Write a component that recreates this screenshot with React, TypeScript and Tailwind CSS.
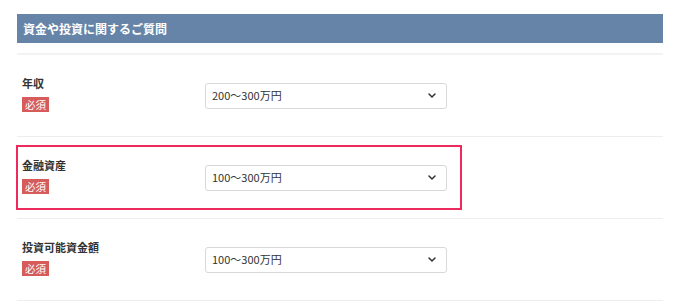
import React from "react";

const font = { fontFamily: '"Noto Sans CJK JP", "Noto Sans", sans-serif' };

function Chevron() {
  return (
    <svg width="8" height="5" viewBox="0 0 8 5" fill="none">
      <path d="M1 1 L4 4 L7 1" stroke="#333333" strokeWidth="1.5" strokeLinecap="round" strokeLinejoin="round" />
    </svg>
  );
}

function Row({ label, value, highlight }: { label: string; value: string; highlight?: boolean }) {
  return (
    <div className="relative h-[82px] border-b border-[#ededed] flex items-center">
      <div className="w-[188px] pl-[5px] pb-[6px] flex flex-col items-start">
        <div className="text-[11px] leading-[20px] font-bold text-[#333333]">{label}</div>
        <div className="mt-[4px] w-[27px] h-[15px] bg-[#d65c5c] text-white text-[10.5px] leading-[15px] flex items-center justify-center">
          必須
        </div>
      </div>
      <div className="w-[242px] h-[26px] border border-[#d8d8d8] rounded-[3px] pl-[6px] pr-[10px] flex items-center justify-between text-[11px] text-[#333333]">
        <span>{value}</span>
        <Chevron />
      </div>
      {highlight && (
        <div className="absolute top-[8px] left-[-1px] w-[446px] h-[65px] border-2 border-[#ee2a5c] pointer-events-none" />
      )}
    </div>
  );
}

export default function App() {
  return (
    <div className="w-[680px] h-[301px] bg-white pt-[14px] px-[17px] overflow-hidden" style={font}>
      <div className="h-[29px] bg-[#6584a7] flex items-center pl-[6px] text-white font-bold text-[12px]">
        資金や投資に関するご質問
      </div>
      <div className="mt-[10px] border-t-2 border-[#f3f3f3]">
        <Row label="年収" value="200～300万円" />
        <Row label="金融資産" value="100～300万円" highlight />
        <Row label="投資可能資金額" value="100～300万円" />
      </div>
    </div>
  );
}
